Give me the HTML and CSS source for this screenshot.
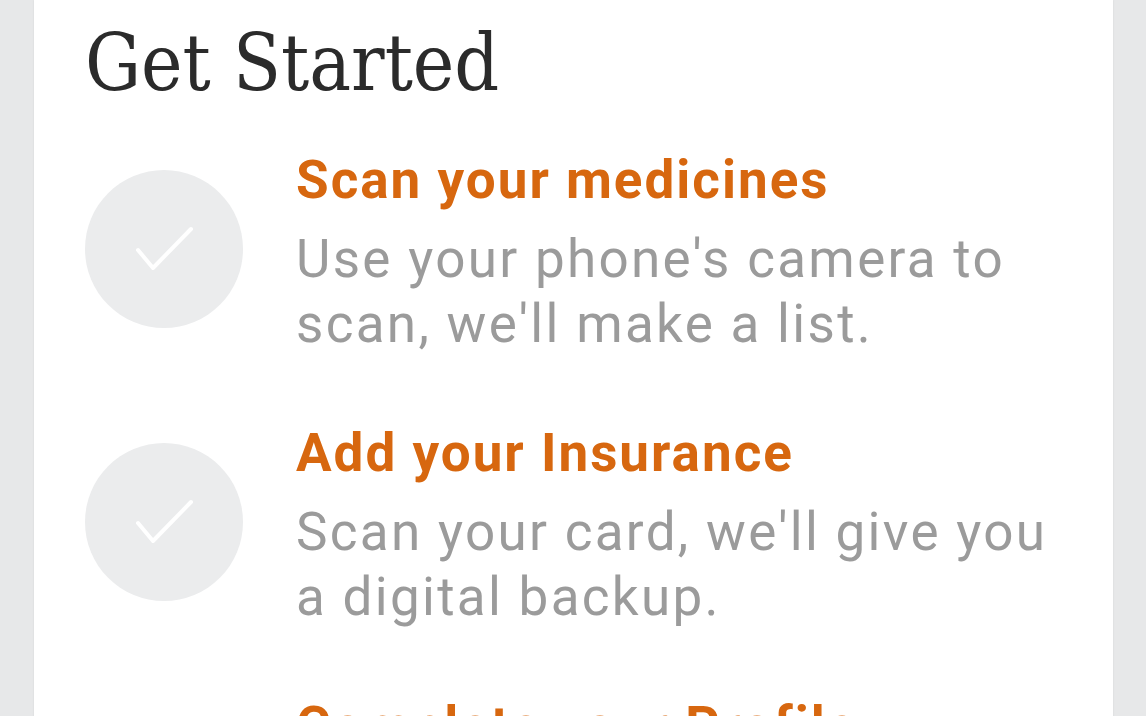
FILE: index.html
```html
<!DOCTYPE html>
<html lang="en">
<head>
  <meta charset="UTF-8">
  <title>Get Started</title>
  <link rel="stylesheet" href="styles.css">
</head>
<body>
  <div class="card">
    <h1 class="title">Get Started</h1>

    <div class="steps">
      <div class="step">
        <div class="check">
          <svg viewBox="0 0 158 158" width="158" height="158"><path d="M53 80 L68 98 L106 59" fill="none" stroke="#fff" stroke-width="4" stroke-linecap="round" stroke-linejoin="round"/></svg>
        </div>
        <div class="step-text">
          <h2>Scan your medicines</h2>
          <p>Use your phone's camera to scan, we'll make a list.</p>
        </div>
      </div>

      <div class="step">
        <div class="check">
          <svg viewBox="0 0 158 158" width="158" height="158"><path d="M53 80 L68 98 L106 59" fill="none" stroke="#fff" stroke-width="4" stroke-linecap="round" stroke-linejoin="round"/></svg>
        </div>
        <div class="step-text">
          <h2>Add your Insurance</h2>
          <p>Scan your card, we'll give you a digital backup.</p>
        </div>
      </div>

      <div class="step">
        <div class="check">
          <svg viewBox="0 0 158 158" width="158" height="158"><path d="M53 80 L68 98 L106 59" fill="none" stroke="#fff" stroke-width="4" stroke-linecap="round" stroke-linejoin="round"/></svg>
        </div>
        <div class="step-text">
          <h2>Complete your Profile</h2>
          <p>Tell us a little about yourself and your doctors.</p>
        </div>
      </div>
    </div>
  </div>
</body>
</html>
```

FILE: styles.css
```css
html, body { margin: 0; height: 100%; overflow: hidden; }
body { background: #e7e8e9; font-family: Roboto, "Liberation Sans", sans-serif; }

.card {
  margin: 0 33px 0 34px;
  min-height: 100%;
  background: #fff;
  padding: 18px 40px 0 51px;
  box-shadow: 0 0 2px rgba(0,0,0,0.08);
  box-sizing: border-box;
}

.title {
  margin: 0;
  font-family: "DejaVu Serif", "Liberation Serif", serif;
  font-stretch: condensed;
  font-weight: normal;
  font-size: 78px;
  line-height: 90px;
  color: #2b2b2b;
}

.steps { display: flex; flex-direction: column; gap: 66px; margin-top: 42px; }
.step { display: flex; align-items: flex-start; gap: 53px; }

.check {
  flex: 0 0 158px;
  height: 158px;
  margin-top: 20px;
  border-radius: 50%;
  background: #ebeced;
}
.check svg { display: block; }

.step-text { max-width: 770px; }
.step-text h2 {
  margin: 0 0 17px;
  font-size: 53px;
  line-height: 60px;
  font-weight: bold;
  letter-spacing: 2px;
  color: #d7670f;
}
.step-text p {
  margin: 0;
  font-size: 53px;
  line-height: 65px;
  letter-spacing: 2.3px;
  color: #9b9b9b;
}
```
